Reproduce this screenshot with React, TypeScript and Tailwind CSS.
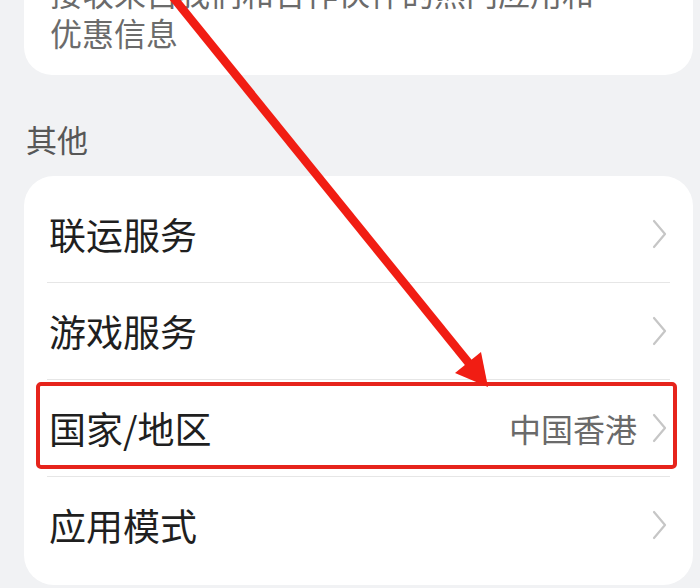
import React from "react";

const font = { fontFamily: '"Noto Sans CJK SC", "Noto Sans", sans-serif' };

function Chevron() {
  return (
    <svg width="16" height="30" viewBox="0 0 16 30" className="shrink-0">
      <path d="M3 2 L14 15 L3 28" fill="none" stroke="#c6c6c6" strokeWidth="2.2" strokeLinecap="round" strokeLinejoin="round" />
    </svg>
  );
}

function Row({ label, value, highlight, last }: { label: string; value?: string; highlight?: boolean; last?: boolean }) {
  return (
    <div className="relative">
      <div className="flex h-[96px] items-center justify-between pl-[25px] pr-[26px]">
        <span className="text-[37px] leading-[40px] text-[#1f1f1f]">{label}</span>
        <div className="flex items-center gap-[14px]">
          {value && <span className="text-[32px] leading-[40px] text-[#6a6a6a]">{value}</span>}
          <Chevron />
        </div>
      </div>
      {!last && <div className="mx-[23px] h-px bg-[#e6e6e6]" />}
      {highlight && (
        <div className="pointer-events-none absolute left-[12px] top-[2px] h-[87px] w-[641px] rounded-[5px] border-[4px] border-[#e6241c]" />
      )}
    </div>
  );
}

export default function App() {
  return (
    <div className="relative h-[588px] w-[700px] overflow-hidden bg-[#f1f2f4]" style={font}>
      <div className="ml-[24px] mt-[-28px] w-[669px] rounded-[28px] bg-white px-[26px] pb-[23px]">
        <p className="text-[32px] leading-[40px] text-[#6b6b6b] whitespace-nowrap">接收来自我们和合作伙伴的热门应用和</p>
        <p className="text-[32px] leading-[40px] text-[#6b6b6b]">优惠信息</p>
      </div>
      <div className="ml-[26px] mt-[44px] text-[31px] leading-[40px] text-[#575757]">其他</div>
      <div className="ml-[24px] mt-[17px] w-[669px] rounded-[30px] bg-white pt-[10px] pb-[12px]">
        <Row label="联运服务" />
        <Row label="游戏服务" />
        <Row label="国家/地区" value="中国香港" highlight />
        <Row label="应用模式" last />
      </div>
      <svg className="pointer-events-none absolute left-0 top-0" width="700" height="588" viewBox="0 0 700 588">
        <line x1="172" y1="-4" x2="472" y2="367" stroke="#f11d13" strokeWidth="8.5" />
        <polygon points="488,387 455,373 481,352" fill="#f11d13" />
      </svg>
    </div>
  );
}
